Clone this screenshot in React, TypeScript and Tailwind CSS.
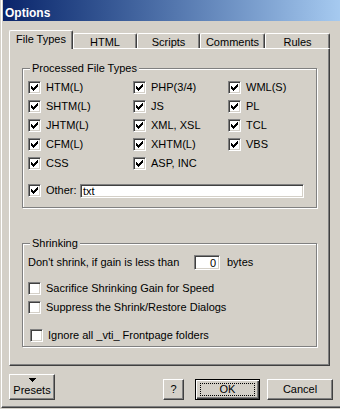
import React from 'react';

const col1 = ['HTM(L)', 'SHTM(L)', 'JHTM(L)', 'CFM(L)', 'CSS'];
const col2 = ['PHP(3/4)', 'JS', 'XML, XSL', 'XHTM(L)', 'ASP, INC'];
const col3 = ['WML(S)', 'PL', 'TCL', 'VBS'];

const tabs = [
  { label: 'HTML', w: 'w-[64px]' },
  { label: 'Scripts', w: 'w-[63px]' },
  { label: 'Comments', w: 'w-[65px]' },
  { label: 'Rules', w: 'w-[65px]' },
];

const CheckMark = () => (
  <svg className="absolute left-[2px] top-[2px]" width="7" height="7" viewBox="0 0 7 7" shapeRendering="crispEdges">
    <g fill="#000">
      <rect x="6" y="0" width="1" height="1" />
      <rect x="5" y="1" width="2" height="1" />
      <rect x="0" y="2" width="1" height="1" />
      <rect x="4" y="2" width="3" height="1" />
      <rect x="0" y="3" width="2" height="1" />
      <rect x="3" y="3" width="3" height="1" />
      <rect x="0" y="4" width="5" height="1" />
      <rect x="1" y="5" width="3" height="1" />
      <rect x="2" y="6" width="1" height="1" />
    </g>
  </svg>
);

const Check = ({ checked }: { checked?: boolean }) => (
  <span className="relative block h-[13px] w-[13px] shrink-0 border border-t-[#808080] border-l-[#808080] border-r-white border-b-white bg-white shadow-[inset_1px_1px_0_#404040,inset_-1px_-1px_0_#d4d0c8]">
    {checked && <CheckMark />}
  </span>
);

const CheckRow = ({ label, checked, className = '' }: { label: string; checked?: boolean; className?: string }) => (
  <div className={`flex h-[13px] items-center gap-[5px] ${className}`}>
    <Check checked={checked} />
    <span className="whitespace-nowrap leading-[13px]">{label}</span>
  </div>
);

const Group = ({ label, className, children }: { label: string; className: string; children: React.ReactNode }) => (
  <div className={`relative ml-[12px] w-[295px] border border-[#808080] shadow-[1px_1px_0_#fff,inset_1px_1px_0_#fff] ${className}`}>
    <span className="absolute left-[7px] top-[-7px] bg-[#d4d0c8] px-[2px] leading-[13px]">{label}</span>
    {children}
  </div>
);

const raised =
  'border border-t-white border-l-white border-r-[#404040] border-b-[#404040] shadow-[inset_-1px_-1px_0_#808080]';

export default function App() {
  return (
    <div className="h-[409px] w-[340px] overflow-hidden bg-[#d4d0c8] pl-px font-['Liberation_Sans',Arial,sans-serif] text-[11px] text-black">
      <div className="flex h-[408px] flex-col border-b border-l border-b-[#404040] border-l-white pl-px shadow-[inset_0_-1px_0_#808080]">
        <div className="flex h-[21px] shrink-0 items-center bg-linear-to-r from-[#0a246a] to-[#a6caf0] pl-[2px] pt-[4px] text-[12px] font-bold text-white">
          Options
        </div>

        <div className="flex flex-col pl-[6px] pt-[9px]">
          {/* tabs */}
          <div className="flex h-[18px] items-end">
            <div className="relative z-10 -mb-px flex h-[19px] w-[64px] justify-center rounded-t-[2px] border-l border-t border-r border-l-white border-t-white border-r-[#404040] bg-[#d4d0c8] pt-[2px] leading-[13px] shadow-[inset_-1px_0_0_#808080]">
              File Types
            </div>
            {tabs.map((t) => (
              <div
                key={t.label}
                className={`flex h-[15px] ${t.w} justify-center rounded-t-[2px] border-l border-t border-r border-l-white border-t-white border-r-[#404040] pt-[2px] leading-[12px] shadow-[inset_-1px_0_0_#808080]`}
              >
                {t.label}
              </div>
            ))}
          </div>

          {/* panel */}
          <div className={`flex h-[318px] w-[321px] flex-col ${raised}`}>
            <Group label="Processed File Types" className="mt-[19px] h-[140px]">
              <div className="flex pl-[5px] pt-[12px]">
                <div className="flex w-[105px] flex-col gap-[6px]">
                  {col1.map((l) => (
                    <CheckRow key={l} label={l} checked />
                  ))}
                </div>
                <div className="flex w-[95px] flex-col gap-[6px]">
                  {col2.map((l) => (
                    <CheckRow key={l} label={l} checked />
                  ))}
                </div>
                <div className="flex flex-col gap-[6px]">
                  {col3.map((l) => (
                    <CheckRow key={l} label={l} checked />
                  ))}
                </div>
              </div>
              <div className="mt-[14px] flex items-start pl-[5px]">
                <Check checked />
                <span className="ml-[5px] w-[34px] leading-[13px]">Other:</span>
                <div className="flex h-[14px] w-[224px] items-center border border-t-[#808080] border-l-[#808080] border-r-white border-b-white bg-white pl-[2px] leading-[12px] shadow-[inset_1px_1px_0_#404040,inset_-1px_-1px_0_#d4d0c8]">
                  txt
                </div>
              </div>
            </Group>

            <Group label="Shrinking" className="mt-[35px] h-[104px]">
              <div className="mt-[11px] flex h-[15px] items-center pl-[5px]">
                <span className="w-[166px] whitespace-nowrap leading-[13px]">Don't shrink, if gain is less than</span>
                <div className="flex h-[15px] w-[26px] items-center justify-end border border-t-[#808080] border-l-[#808080] border-r-white border-b-white bg-white pr-[3px] leading-[12px] shadow-[inset_1px_1px_0_#404040,inset_-1px_-1px_0_#d4d0c8]">
                  0
                </div>
                <span className="ml-[7px] leading-[13px]">bytes</span>
              </div>
              <div className="flex flex-col pl-[5px]">
                <CheckRow label="Sacrifice Shrinking Gain for Speed" className="mt-[12px]" />
                <CheckRow label="Suppress the Shrink/Restore Dialogs" className="mt-[6px]" />
                <CheckRow label="Ignore all _vti_ Frontpage folders" className="ml-[2px] mt-[15px]" />
              </div>
            </Group>
          </div>

          {/* buttons */}
          <div className="mt-[8px] flex items-end">
            <button className={`flex h-[26px] w-[46px] flex-col items-center ${raised} bg-[#d4d0c8] pt-[3px] leading-[13px]`}>
              <svg width="7" height="4" viewBox="0 0 7 4" shapeRendering="crispEdges" className="mb-[2px]">
                <g fill="#000">
                  <rect x="0" y="0" width="7" height="1" />
                  <rect x="1" y="1" width="5" height="1" />
                  <rect x="2" y="2" width="3" height="1" />
                  <rect x="3" y="3" width="1" height="1" />
                </g>
              </svg>
              Presets
            </button>
            <button className={`ml-[108px] flex h-[21px] w-[21px] items-center justify-center ${raised} bg-[#d4d0c8] leading-[13px]`}>
              ?
            </button>
            <button className="relative ml-[11px] h-[21px] w-[65px] border border-black bg-[#d4d0c8] leading-[13px] shadow-[inset_1px_1px_0_#fff,inset_-1px_-1px_0_#404040,inset_-2px_-2px_0_#808080]">
              <span className="absolute bottom-[3px] left-[4px] right-[4px] top-[3px] border border-dotted border-black" />
              OK
            </button>
            <button className={`ml-[7px] h-[21px] w-[66px] ${raised} bg-[#d4d0c8] leading-[13px]`}>Cancel</button>
          </div>
        </div>
      </div>
    </div>
  );
}
